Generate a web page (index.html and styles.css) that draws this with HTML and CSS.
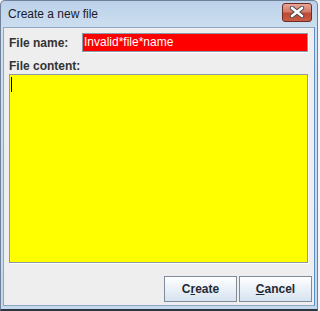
FILE: index.html
```html
<!DOCTYPE html>
<html lang="en">
<head>
  <meta charset="UTF-8" />
  <title>Create a new file</title>
  <link rel="stylesheet" href="styles.css">
</head>
<body>

  <div class="window">
    <div class="titlebar">
      <span class="title">Create a new file</span>
      <button class="close" type="button" aria-label="Close">
        <svg width="18" height="12" viewBox="0 0 18 12">
          <path d="M4 2 L14 10 M14 2 L4 10" stroke="#4a4a4a" stroke-width="4.4" stroke-linecap="round"/>
          <path d="M4 2 L14 10 M14 2 L4 10" stroke="#ffffff" stroke-width="2.6" stroke-linecap="round"/>
        </svg>
      </button>
    </div>

    <form class="content">
      <div class="name-row">
        <label for="filename">File name:</label>
        <div class="field invalid" id="filename">Invalid*file*name</div>
      </div>

      <label class="content-label">File content:</label>
      <div class="area"><span class="caret"></span></div>

      <div class="buttons">
        <button type="submit" class="btn">C<u>r</u>eate</button>
        <button type="button" class="btn"><u>C</u>ancel</button>
      </div>
    </form>
  </div>

</body>
</html>
```

FILE: styles.css
```css
body {
  margin: 0;
  background: #f4f6f9;
  font-family: "Liberation Sans", Arial, sans-serif;
}

.window {
  width: 318px;
  height: 311px;
  box-sizing: border-box;
  border: 1px solid #6f8299;
  border-bottom: 2px solid #2c3640;
  border-radius: 5px 5px 0 0;
  background: linear-gradient(#bcd2ea, #cfe0f1 30px, #c4d8ee);
  padding: 0 2px 3px 2px;
  display: flex;
  flex-direction: column;
}

.titlebar {
  height: 27px;
  display: flex;
  align-items: center;
  padding-left: 5px;
  padding-right: 3px;
}

.title {
  flex: 1;
  font-size: 12px;
  color: #1b1a2a;
  margin-top: -1px;
}

.close {
  width: 30px;
  height: 19px;
  margin-top: -4px;
  padding: 0;
  border: 1px solid #6e2b22;
  border-radius: 3px;
  background: linear-gradient(#e6a699, #d47c6b 45%, #c04a35 55%, #c75c45);
  display: flex;
  align-items: center;
  justify-content: center;
}

.content {
  flex: 1;
  margin: 0;
  background: #eeeeee;
  border: 1px solid #8fa6c0;
  border-right-color: #5a8ec8;
  padding: 5px 2px 3px 5px;
  display: flex;
  flex-direction: column;
}

.name-row {
  display: flex;
  align-items: center;
  margin-right: 4px;
  height: 19px;
}

label {
  font-size: 12px;
  font-weight: bold;
  color: #333333;
}

.name-row label {
  width: 73px;
}

.field {
  flex: 1;
  height: 19px;
  box-sizing: border-box;
  border: 1px solid #8d9aa8;
  box-shadow: 1px 1px 0 #ffffff;
  font-size: 12px;
  line-height: 17px;
  padding-left: 1px;
}

.invalid {
  background: #ff0000;
  color: #ffffff;
}

.content-label {
  margin-top: 8px;
  height: 13px;
  line-height: 13px;
}

.area {
  height: 189px;
  box-sizing: border-box;
  margin-top: 1px;
  margin-right: 4px;
  background: #ffff00;
  border: 1px solid #8d9aa8;
  box-shadow: 1px 1px 0 #ffffff;
  padding: 2px 0 0 1px;
}

.caret {
  display: block;
  width: 1px;
  height: 15px;
  background: #000000;
}

.buttons {
  margin-top: 13px;
  display: flex;
  justify-content: flex-end;
  gap: 2px;
}

.btn {
  width: 73px;
  height: 26px;
  border: 1px solid #7d8b9a;
  background: linear-gradient(#ffffff, #eef3f9 40%, #d7e3f0);
  font-family: "Liberation Sans", Arial, sans-serif;
  font-size: 12px;
  font-weight: bold;
  color: #1f2a36;
  padding: 0;
}
```
